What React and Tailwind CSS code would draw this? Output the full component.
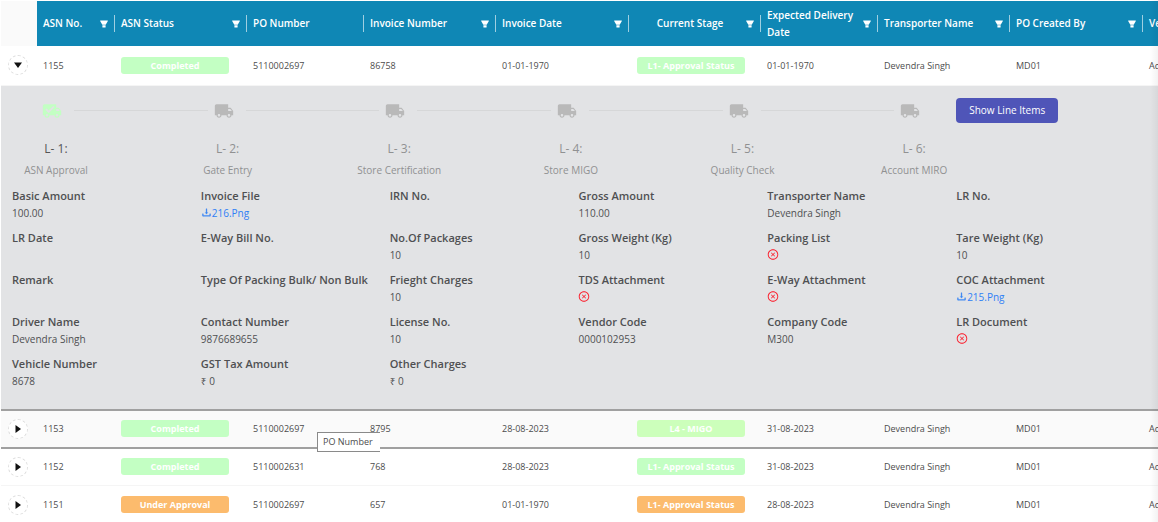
import React, { useState } from "react";
import { MdLocalShipping } from "react-icons/md";
import {
  AiFillFilter,
  AiOutlineCloseCircle,
  AiOutlineDownload,
} from "react-icons/ai";
import clsx from "clsx";

const columns = [
  { label: "ASN No.", width: "w-[78px]", filter: true },
  { label: "ASN Status", width: "w-[132px]", filter: true },
  { label: "PO Number", width: "w-[117px]" },
  { label: "Invoice Number", width: "w-[132px]", filter: true },
  { label: "Invoice Date", width: "w-[133px]", filter: true },
  { label: "Current Stage", width: "w-[132px]", filter: true, center: true },
  { label: "Expected Delivery Date", width: "w-[117px]", filter: true },
  { label: "Transporter Name", width: "w-[132px]", filter: true },
  { label: "PO Created By", width: "w-[133px]", filter: true },
  { label: "Vendor Name", width: "w-[132px]", filter: true },
];

const rows = [
  {
    asn: "1155",
    status: "Completed",
    po: "5110002697",
    invoice: "86758",
    date: "01-01-1970",
    stage: "L1- Approval Status",
    stageColor: "bg-[#c3ffc3]",
    delivery: "01-01-1970",
  },
  {
    asn: "1153",
    status: "Completed",
    po: "5110002697",
    invoice: "8795",
    date: "28-08-2023",
    stage: "L4 - MIGO",
    stageColor: "bg-[#ccffbb]",
    delivery: "31-08-2023",
  },
  {
    asn: "1152",
    status: "Completed",
    po: "5110002631",
    invoice: "768",
    date: "28-08-2023",
    stage: "L1- Approval Status",
    stageColor: "bg-[#c3ffc3]",
    delivery: "31-08-2023",
  },
  {
    asn: "1151",
    status: "Under Approval",
    po: "5110002697",
    invoice: "657",
    date: "01-01-1970",
    stage: "L1- Approval Status",
    stageColor: "bg-[#fcbb6d]",
    delivery: "28-08-2023",
  },
];

const steps = [
  "ASN Approval",
  "Gate Entry",
  "Store Certification",
  "Store MIGO",
  "Quality Check",
  "Account MIRO",
];

const details = [
  { label: "Basic Amount", value: "100.00" },
  { label: "Invoice File", file: "216.Png" },
  { label: "IRN No." },
  { label: "Gross Amount", value: "110.00" },
  { label: "Transporter Name", value: "Devendra Singh" },
  { label: "LR No." },
  { label: "LR Date" },
  { label: "E-Way Bill No." },
  { label: "No.Of Packages", value: "10" },
  { label: "Gross Weight (Kg)", value: "10" },
  { label: "Packing List", missing: true },
  { label: "Tare Weight (Kg)", value: "10" },
  { label: "Remark" },
  { label: "Type Of Packing Bulk/ Non Bulk" },
  { label: "Frieght Charges", value: "10" },
  { label: "TDS Attachment", missing: true },
  { label: "E-Way Attachment", missing: true },
  { label: "COC Attachment", file: "215.Png" },
  { label: "Driver Name", value: "Devendra Singh" },
  { label: "Contact Number", value: "9876689655" },
  { label: "License No.", value: "10" },
  { label: "Vendor Code", value: "0000102953" },
  { label: "Company Code", value: "M300" },
  { label: "LR Document", missing: true },
  { label: "Vehicle Number", value: "8678" },
  { label: "GST Tax Amount", value: "₹ 0" },
  { label: "Other Charges", value: "₹ 0" },
];

/* Truck with a tick cut out of the box, used for the finished step */
const TruckCheck = () => (
  <svg viewBox="0 0 24 24" className="w-5 h-5" fill="currentColor">
    <path
      fillRule="evenodd"
      d="M18 18.5A1.5 1.5 0 0 0 19.5 17 1.5 1.5 0 0 0 18 15.5 1.5 1.5 0 0 0 16.5 17 1.5 1.5 0 0 0 18 18.5zM19.5 9.5H17V12h4.46zM6 18.5A1.5 1.5 0 0 0 7.5 17 1.5 1.5 0 0 0 6 15.5 1.5 1.5 0 0 0 4.5 17 1.5 1.5 0 0 0 6 18.5zM20 8l3 4v5h-2a3 3 0 0 1-6 0H9a3 3 0 0 1-6 0H1V6c0-1.11.89-2 2-2h14v4zM5.5 9L4 10.5 8 14.5 15 7.5 13.5 6 8 11.5z"
    />
  </svg>
);

const Badge = ({ color, children }) => (
  <span
    className={clsx(
      "block w-[108px] rounded-[3px] text-center text-[9px] leading-[17px] font-bold text-white",
      color,
    )}
  >
    {children}
  </span>
);

const DetailValue = ({ item }) => {
  if (item.file) {
    return (
      <a href="#" className="flex items-center text-[#2f80f5]">
        <AiOutlineDownload className="w-[11px] h-[11px]" strokeWidth="30" />
        {item.file}
      </a>
    );
  }

  if (item.missing) {
    return (
      <AiOutlineCloseCircle
        className="w-3 h-[17px] text-[#fb1d2b]"
        role="img"
        aria-label="Not attached"
      />
    );
  }

  return item.value || "";
};

const RowDetails = () => (
  <div className="bg-[#e2e3e5] pt-3 pb-[19px] pl-[11px] text-[10px]">
    {/* STEPPER + BUTTON */}

    <div className="grid grid-cols-6 items-start">
      <ol className="col-span-5 flex pl-[30px] pr-9">
        {steps.map((step, i) => (
          <li
            key={step}
            className={i < steps.length - 1 ? "flex-1 min-w-0" : "w-5"}
          >
            <div
              className={clsx(
                "flex h-[26px] items-center",
                i === 0 ? "text-[#c3ffc3]" : "text-[#b9b9b9]",
              )}
            >
              {i === 0 ? (
                <TruckCheck />
              ) : (
                <MdLocalShipping className="w-5 h-5" />
              )}
              {i < steps.length - 1 && (
                <span className="ml-3 mr-[6px] h-px flex-1 bg-[#d6d7d8]" />
              )}
            </div>

            <div className="mt-[14px] flex w-[28px] flex-col items-center whitespace-nowrap">
              <span
                className={clsx(
                  "text-xs leading-[22px]",
                  i === 0 ? "text-[#555555]" : "text-[#909192]",
                )}
              >
                L- {i + 1}:
              </span>
              <span className="leading-5 text-[#909192]">{step}</span>
            </div>
          </li>
        ))}
      </ol>

      <div>
        <button
          type="button"
          className="rounded bg-[#4f55b8] px-[13px] leading-[25px] text-white"
        >
          Show Line Items
        </button>
      </div>
    </div>

    {/* ASN FIELDS */}

    <dl className="mt-2 grid grid-cols-6 gap-y-2 text-[#4f5052]">
      {details.map((item) => (
        <div key={item.label} className="whitespace-nowrap">
          <dt className="text-[11px] leading-4 font-semibold">{item.label}</dt>
          <dd className="h-[18px] leading-[18px]">
            <DetailValue item={item} />
          </dd>
        </div>
      ))}
    </dl>
  </div>
);

const AsnTable = () => {
  const [openRow, setOpenRow] = useState("1155");

  return (
    <table className="w-max table-fixed border-collapse text-left text-[9px]">
      <thead>
        <tr className="h-[45px]">
          <th className="w-[36px] bg-[#fafafa]" aria-label="Expand" />
          {columns.map((col) => (
            <th
              key={col.label}
              className={clsx("bg-[#0f87b5] p-0 text-white", col.width)}
            >
              <div className="flex h-[17px] items-center border-r border-[#9fcfe1] pl-[6px] pr-[5px] text-[10px] leading-[17px] font-semibold">
                <span className={clsx("flex-1", col.center && "text-center")}>
                  {col.label}
                </span>
                {col.filter && (
                  <button type="button" aria-label={`Filter ${col.label}`}>
                    <AiFillFilter className="h-[10px] w-[10px]" />
                  </button>
                )}
              </div>
            </th>
          ))}
        </tr>
      </thead>

      <tbody>
        {rows.map((row) => {
          const open = row.asn === openRow;
          const hovered = row.asn === "1153";

          return (
            <React.Fragment key={row.asn}>
              <tr
                className={clsx(
                  "text-[#4c4c4c]",
                  open ? "h-[39px]" : "h-[38px]",
                  hovered
                    ? "border-y-2 border-[#a0a0a0] bg-[#fafafa]"
                    : "border-b border-[#f5f5f5] bg-white",
                )}
              >
                <td className="p-0 pl-[7px]">
                  <button
                    type="button"
                    aria-label={open ? "Collapse row" : "Expand row"}
                    onClick={() => setOpenRow(open ? "" : row.asn)}
                    className="flex h-5 w-5 items-center justify-center rounded-full border border-dashed border-[#dddddd] bg-white"
                  >
                    <svg
                      viewBox="0 0 10 10"
                      className={clsx("h-[10px] w-[10px]", open && "rotate-90")}
                    >
                      <path d="M2.5 1l5.5 4-5.5 4z" fill="#111" />
                    </svg>
                  </button>
                </td>
                <td className="p-0 pl-[6px]">{row.asn}</td>
                <td className="p-0 pl-[6px]">
                  <Badge
                    color={
                      row.status === "Completed"
                        ? "bg-[#c3ffc3]"
                        : "bg-[#fcbb6d]"
                    }
                  >
                    {row.status}
                  </Badge>
                </td>
                <td className="p-0 pl-[6px]">{row.po}</td>
                <td className="p-0 pl-[6px]">{row.invoice}</td>
                <td className="p-0 pl-[6px]">{row.date}</td>
                <td className="p-0 pl-2">
                  <Badge color={row.stageColor}>{row.stage}</Badge>
                </td>
                <td className="p-0 pl-[6px]">{row.delivery}</td>
                <td className="p-0 pl-[6px]">Devendra Singh</td>
                <td className="p-0 pl-[6px]">MD01</td>
                <td className="p-0 pl-[6px]">Admin</td>
              </tr>

              {open && (
                <tr>
                  <td colSpan={11} className="bg-[#e2e3e5] p-0">
                    <div className="w-[calc(100vw-14px)]">
                      <RowDetails />
                    </div>
                  </td>
                </tr>
              )}
            </React.Fragment>
          );
        })}
      </tbody>
    </table>
  );
};

const App = () => {
  return (
    <div className="relative overflow-hidden bg-white pt-px pl-px font-['Open_Sans','Noto_Sans',sans-serif]">
      <AsnTable />

      {/* SCROLL SHADOW */}

      <div className="pointer-events-none absolute inset-y-0 right-0 w-2 bg-linear-to-l from-black/5 to-transparent" />

      {/* HEADER TOOLTIP */}

      <div
        role="tooltip"
        className="absolute left-[317px] top-[432px] border border-r-0 border-[#8a8a8a] bg-white pl-[5px] pr-[7px] text-[9px] leading-[18px] text-[#4c4c4c]"
      >
        PO Number
      </div>
    </div>
  );
};

export default App;
